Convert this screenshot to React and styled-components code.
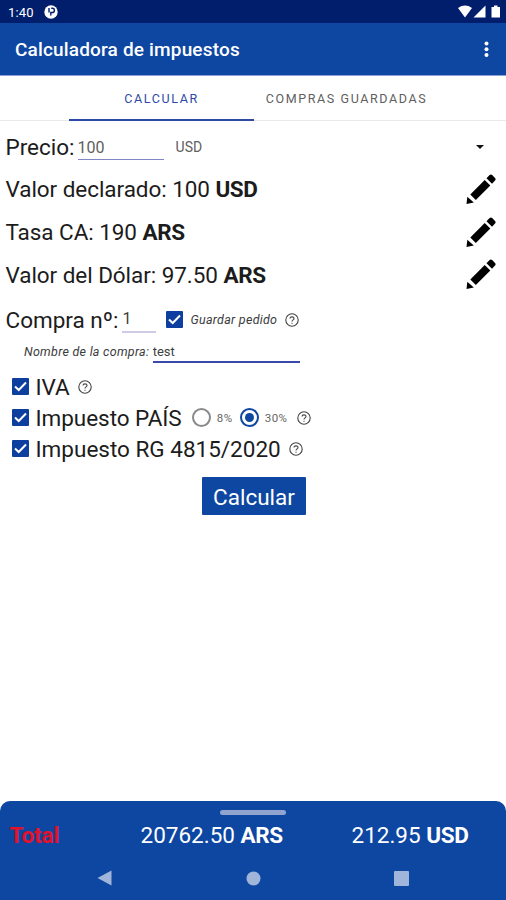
import React, { useState } from 'react';
import styled, { createGlobalStyle } from 'styled-components';

const GlobalStyle = createGlobalStyle`
  * {
    box-sizing: border-box;
  }
  body {
    margin: 0;
    background: #fff;
    font-family: Roboto, sans-serif;
    color: #1c1c1c;
  }
  input, button {
    font-family: inherit;
  }
`;

const Screen = styled.div`
  display: flex;
  flex-direction: column;
  width: 506px;
  height: 900px;
  overflow: hidden;
`;

const StatusBar = styled.div`
  display: flex;
  align-items: center;
  height: 23px;
  padding: 1px 5px 0 8px;
  background: #001e6c;
  color: #fff;
  font-size: 13px;
`;

const Clock = styled.span`
  width: 36px;
  letter-spacing: 0.2px;
`;

const StatusIcons = styled.div`
  display: flex;
  align-items: center;
  margin-left: auto;
`;

const AppBar = styled.header`
  display: flex;
  align-items: center;
  justify-content: space-between;
  height: 52px;
  padding: 1px 17px 0 15px;
  background: #0d47a1;
  color: #fff;
`;

const Title = styled.h1`
  margin: 0;
  font-size: 19px;
  font-weight: 500;
  letter-spacing: 0.17px;
`;

const Tabs = styled.nav`
  display: flex;
  height: 46px;
  padding-left: 69px;
  border-top: 1px solid #8f9fd6;
  border-bottom: 1px solid #e8e8e8;
`;

const Tab = styled.div`
  width: 185px;
  height: 45px;
  line-height: 46px;
  text-align: center;
  font-size: 12.5px;
  letter-spacing: 1.6px;
  white-space: nowrap;
  color: ${({ $active }) => ($active ? '#2c4aa5' : '#606060')};
  border-bottom: 2px solid ${({ $active }) => ($active ? '#2c4aa5' : 'transparent')};
`;

const Form = styled.main`
  flex: 1;
  padding-top: 5px;
`;

const Row = styled.div`
  display: flex;
  align-items: center;
  height: ${({ $height }) => $height || 42.7}px;
  padding: 0 10px 0 5.5px;
`;

const Label = styled.span`
  font-size: 22.5px;
  letter-spacing: ${({ $spacing }) => $spacing || 0}px;
  white-space: nowrap;
`;

const Code = styled.b`
  letter-spacing: -0.4px;
`;

const PriceInput = styled.input`
  width: 86px;
  height: 26px;
  margin-left: 3px;
  padding: 1px 0 0;
  border: none;
  border-bottom: 1px solid #7f86c6;
  border-radius: 0;
  outline: none;
  background: none;
  color: #606060;
  font-size: 16px;
`;

const NumberInput = styled(PriceInput)`
  width: 34px;
  margin-left: 4px;
  padding: 0;
  border-bottom: 2px solid #cfcbe6;
  color: #3c3c3c;
`;

const NameInput = styled(PriceInput)`
  width: 147px;
  height: 21px;
  margin: 2px 0 0 3.5px;
  padding: 0;
  border-bottom: 2px solid #3949ab;
  color: #404040;
  font-size: 13px;
`;

const Currency = styled.span`
  flex: 1;
  margin-left: 12px;
  color: #606060;
  font-size: 14px;
`;

const Caret = styled.span`
  margin-right: 12px;
  border: 4px solid transparent;
  border-top-color: #111;
  border-bottom: none;
`;

const EditButton = styled.button`
  display: flex;
  margin: -1px 0 0 auto;
  padding: 0;
  border: none;
  background: none;
`;

const Small = styled.span`
  color: #3c3c3c;
  font-size: 12.5px;
  font-style: italic;
  white-space: nowrap;
  margin-left: ${({ $gap }) => $gap || 0}px;
  letter-spacing: 0.28px;
`;

const Box = styled.span`
  display: flex;
  align-items: center;
  justify-content: center;
  width: 17px;
  height: 17px;
  border-radius: 1px;
  background: #0d3f9f;
  margin: ${({ $margin }) => $margin || 0};
`;

const Help = styled.span`
  display: flex;
  margin-left: ${({ $gap }) => $gap}px;
`;

const Taxes = styled.div`
  margin-top: 12px;
`;

const Radio = styled.span`
  display: flex;
  align-items: center;
  justify-content: center;
  width: 19px;
  height: 19px;
  margin-left: ${({ $gap }) => $gap}px;
  border: 2px solid ${({ $checked }) => ($checked ? '#0d47a1' : '#8a8a8a')};
  border-radius: 50%;

  &::after {
    content: '';
    width: 9px;
    height: 9px;
    border-radius: 50%;
    background: ${({ $checked }) => ($checked ? '#0d47a1' : 'transparent')};
  }
`;

const Percent = styled.span`
  width: ${({ $width }) => $width}px;
  margin-left: 6px;
  color: #666;
  font-size: 11.5px;
  letter-spacing: 0.5px;
`;

const Submit = styled.button`
  display: block;
  width: 104px;
  height: 38px;
  margin: 12.9px 0 0 202px;
  padding: 1px 0 0;
  border: none;
  border-radius: 1px;
  background: #0d47a1;
  color: #fff;
  font-size: 22.5px;
`;

const Footer = styled.footer`
  height: 99px;
  padding-top: 9px;
  border-radius: 10px 10px 0 0;
  background: #0d47a1;
  color: #fff;
`;

const Handle = styled.div`
  width: 66px;
  height: 5px;
  margin: 0 auto;
  border-radius: 3px;
  background: #90a4cf;
`;

const Totals = styled.div`
  display: grid;
  grid-template-columns: 131px 211px 1fr;
  padding: 6px 0 0 9.5px;
  font-size: 22.5px;
  line-height: 28px;
  white-space: nowrap;
`;

const TotalLabel = styled.span`
  color: #e3122b;
  font-weight: 700;
  letter-spacing: -0.1px;
`;

const NavBar = styled.div`
  display: flex;
  align-items: center;
  justify-content: space-between;
  height: 22px;
  margin-top: 18px;
  padding: 0 97px;
`;

const Pencil = () => (
  <svg width="30" height="30" viewBox="0 0 30 30" fill="#000">
    <path d="M.5 30 1.3 22.8 7.8 28.4Z" />
    <path d="M4.3 20.5 18.7 6.1 24.3 11.6 9.8 26.1Z" />
    <path d="M20.5 4.3 23.6 1.1Q24.9 0 26.2 1.1L29 3.9Q30.1 5.1 29 6.4L26 9.8Z" />
  </svg>
);

const Checkbox = ({ margin }) => (
  <Box $margin={margin}>
    <svg width="15" height="15" viewBox="0 0 15 15" fill="none" stroke="#fff" strokeWidth="2">
      <path d="M2 7.5 5.7 11 13 3.5" />
    </svg>
  </Box>
);

const HelpIcon = ({ gap }) => (
  <Help $gap={gap}>
    <svg width="14" height="14" viewBox="0 0 14 14" fill="none" stroke="#444" strokeWidth="1.1">
      <circle cx="7" cy="7" r="6.2" />
      <path d="M5 5.6C5 3.3 9 3.3 9 5.5 9 6.9 7 6.9 7 8.5M7 9.7V10.8" />
    </svg>
  </Help>
);

const values = [
  { label: 'Valor declarado: 100', currency: 'USD' },
  { label: 'Tasa CA: 190', currency: 'ARS' },
  { label: 'Valor del Dólar: 97.50', currency: 'ARS' },
];

const App = () => {
  const [price, setPrice] = useState('100');
  const [number, setNumber] = useState('1');
  const [name, setName] = useState('test');

  return (
    <>
      <GlobalStyle />
      <Screen>
        <StatusBar>
          <Clock>1:40</Clock>
          <svg width="14" height="14" viewBox="0 0 14 14">
            <circle cx="7" cy="7" r="6.7" fill="#fff" />
            <path d="M5 3V7.5M7.2 3.3H8.3A2 2 0 0 1 8.3 7.5H6.8V10.5" fill="none" stroke="#001e6c" strokeWidth="1.4" />
          </svg>
          <StatusIcons>
            <svg width="43" height="14" viewBox="0 0 43 14" fill="#fff">
              <path d="M0 3Q7 -1.8 14 3L7 12.5Z" />
              <path d="M15.5 12.5 27.5 .5V12.5Z" />
              <path d="M33.5 2H36V.5H39.5V2H42V12.5H33.5Z" />
            </svg>
          </StatusIcons>
        </StatusBar>
        <AppBar>
          <Title>Calculadora de impuestos</Title>
          <svg width="5" height="17" viewBox="0 0 5 17" fill="#fff">
            <circle cx="2.5" cy="2.5" r="2" />
            <circle cx="2.5" cy="8.2" r="2" />
            <circle cx="2.5" cy="14" r="2" />
          </svg>
        </AppBar>
        <Tabs>
          <Tab $active>CALCULAR</Tab>
          <Tab>COMPRAS GUARDADAS</Tab>
        </Tabs>

        <Form>
          <Row $height={42}>
            <Label>Precio:</Label>
            <PriceInput value={price} onChange={(e) => setPrice(e.target.value)} />
            <Currency>USD</Currency>
            <Caret />
          </Row>
          {values.map((item) => (
            <Row key={item.label}>
              <Label $spacing={-0.06}>
                {item.label} <Code>{item.currency}</Code>
              </Label>
              <EditButton>
                <Pencil />
              </EditButton>
            </Row>
          ))}
          <Row $height={47.4}>
            <Label>Compra nº:</Label>
            <NumberInput value={number} onChange={(e) => setNumber(e.target.value)} />
            <Checkbox margin="-1px 0 0 10px" />
            <Small $gap={7}>Guardar pedido</Small>
            <HelpIcon gap={8} />
          </Row>
          <Row $height={16}>
            <Small $gap={18.5}>Nombre de la compra:</Small>
            <NameInput value={name} onChange={(e) => setName(e.target.value)} />
          </Row>

          <Taxes>
            <Row $height={31}>
              <Checkbox margin="0 7px 0 6px" />
              <Label>IVA</Label>
              <HelpIcon gap={8} />
            </Row>
            <Row $height={31}>
              <Checkbox margin="0 7px 0 6px" />
              <Label $spacing={-0.05}>Impuesto PAÍS</Label>
              <Radio $gap={10} />
              <Percent $width={17}>8%</Percent>
              <Radio $gap={6} $checked />
              <Percent $width={25}>30%</Percent>
              <HelpIcon gap={7} />
            </Row>
            <Row $height={31}>
              <Checkbox margin="0 7px 0 6px" />
              <Label>Impuesto RG 4815/2020</Label>
              <HelpIcon gap={8} />
            </Row>
          </Taxes>
          <Submit>Calcular</Submit>
        </Form>

        <Footer>
          <Handle />
          <Totals>
            <TotalLabel>Total</TotalLabel>
            <span>
              20762.50 <Code>ARS</Code>
            </span>
            <span>
              212.95 <Code>USD</Code>
            </span>
          </Totals>
          <NavBar>
            <svg width="15" height="16" viewBox="0 0 15 16" fill="#9fb5da">
              <path d="M.5 8 14.5 .5V15.5Z" />
            </svg>
            <svg width="15" height="15" viewBox="0 0 15 15" fill="#9fb5da">
              <circle cx="7.5" cy="7.5" r="7" />
            </svg>
            <svg width="15" height="15" viewBox="0 0 15 15" fill="#9fb5da">
              <rect width="15" height="15" rx="1" />
            </svg>
          </NavBar>
        </Footer>
      </Screen>
    </>
  );
};

export default App;
